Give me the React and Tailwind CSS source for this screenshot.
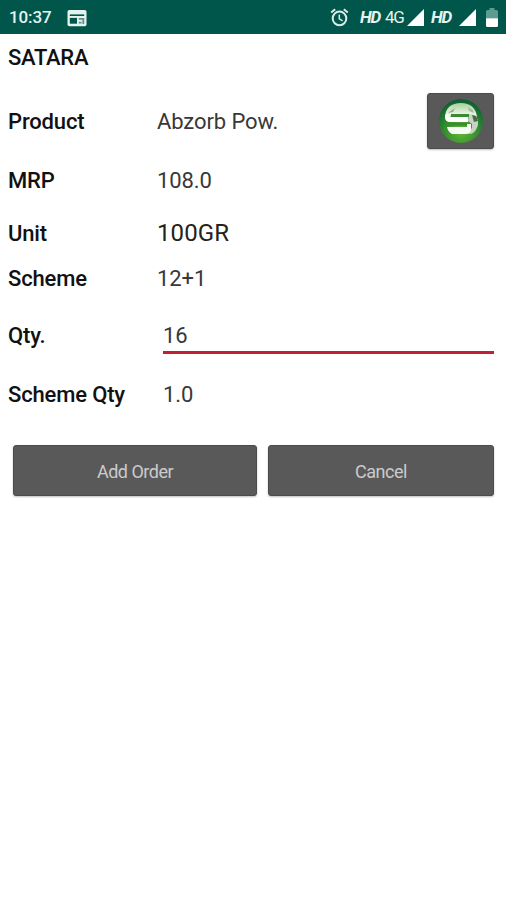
import { useState } from 'react';

function NewsIcon() {
  return (
    <svg className="mt-px ml-[16px] w-[20px] h-[18px]" viewBox="0 0 20 18" aria-hidden="true">
      <rect x="0.5" y="1" width="19" height="16.3" rx="1.8" fill="#e4f3ee" />
      <path d="M2.8 6.2H17.2" stroke="#00564a" strokeWidth="1.6" />
      <rect x="2.8" y="8.9" width="7.2" height="5.8" fill="#00564a" />
      <path d="M11.8 9.8H17.2M11.8 13.6H14.6" stroke="#5b9389" strokeWidth="1.8" />
      <path d="M16.3 9V15" stroke="#5b9389" strokeWidth="1.8" />
    </svg>
  );
}

function AlarmIcon() {
  return (
    <svg className="w-[19px] h-[19px]" fill="none" stroke="#d9ece7" viewBox="0 0 19 19" aria-hidden="true">
      <circle cx="9.5" cy="10.4" r="6.8" strokeWidth="2" />
      <path d="M1.2 4.6L5.2 1.3M17.8 4.6L13.8 1.3" strokeWidth="2" />
      <path d="M9.3 6.4V10.8L12.6 12.8" strokeWidth="1.5" />
    </svg>
  );
}

function SignalIcon() {
  return (
    <svg className="w-[17px] h-[17px]" viewBox="0 0 17 17" aria-hidden="true">
      <path d="M17 0V17H0Z" fill="#ffffff" />
    </svg>
  );
}

function BatteryIcon() {
  return (
    <svg className="w-[12px] h-[19px]" viewBox="0 0 12 19" aria-hidden="true">
      <path d="M3.5 0H8.5V2H10.5Q12 2 12 3.5V10.5H0V3.5Q0 2 1.5 2H3.5Z" fill="#5c9c90" />
      <path d="M0 10.3H12V17.5Q12 19 10.5 19H1.5Q0 19 0 17.5Z" fill="#ffffff" />
    </svg>
  );
}

function ProductLogo() {
  return (
    <svg className="w-[46px] h-[46px]" viewBox="0 0 46 46" aria-hidden="true">
      <defs>
        <radialGradient id="ball" cx="0.5" cy="0.75" r="0.7">
          <stop offset="0" stopColor="#62b832" />
          <stop offset="0.55" stopColor="#328e2e" />
          <stop offset="1" stopColor="#0f6033" />
        </radialGradient>
        <linearGradient id="cap" x1="0" y1="0" x2="0" y2="1">
          <stop offset="0" stopColor="#a5cf98" />
          <stop offset="0.7" stopColor="#f3f9f0" />
        </linearGradient>
      </defs>
      <circle cx="23" cy="23" r="22" fill="url(#ball)" />
      {/* ball top */}
      <path d="M7 19Q8 5 23 5Q37 5 39 19L32 17H13L11 23Q7 22 7 19Z" fill="url(#cap)" />
      <path d="M10 15L17 10L15 14Z" fill="#8fa58a" />
      <path d="M30 9L35 12L36 15L31 13Z" fill="#a5b9a0" />
      {/* shaded right side */}
      <path d="M31 16L37 17L40 22V27Q38 34 33 36L29 35L34 30V26L30 23Z" fill="#c6d2c2" />
      <path d="M34 17L38 18L40 23L36 24Z" fill="#4a6a47" />
      {/* letter body */}
      <path d="M7 17H12V19H30V24H12Q7 24 7 19Z" fill="#ffffff" />
      <path d="M9 29H29V26H33V31Q33 36 28 36H14Q10 34 9 29Z" fill="#f6fbf3" />
      <path d="M13 17.300H31M8 26.300H29" stroke="#3a8b34" strokeWidth="2.400" />
    </svg>
  );
}

function StatusBar() {
  return (
    <header className="flex h-[34px] items-center bg-[#00564a] pl-[9px] pr-[8px] text-[#e4f3ee]">
      <span className="mt-[2px] w-[42px] whitespace-nowrap text-[17px] font-medium tracking-[-0.1px]">10:37</span>
      <NewsIcon />
      <div className="ml-auto flex items-center whitespace-nowrap text-[17px]">
        <AlarmIcon />
        <span className="mt-px ml-[11px] w-[25px] font-bold italic tracking-[-1.2px]">HD</span>
        <span className="mt-px w-[22px] tracking-[-1.4px]">4G</span>
        <SignalIcon />
        <span className="mt-px ml-[7px] w-[28px] font-bold italic tracking-[-1.2px]">HD</span>
        <SignalIcon />
        <span className="ml-[10px]"><BatteryIcon /></span>
      </div>
    </header>
  );
}

function Field({ label, className, children }) {
  return (
    <div className={`flex items-center ${className}`}>
      <span className="w-[149px] shrink-0 text-[22px] font-medium tracking-[-0.15px] text-[#111111]">{label}</span>
      {children}
    </div>
  );
}

const VALUE = 'text-[22px] text-[#383838] tracking-[-0.1px]';
const BUTTON = 'h-[51px] rounded-[3px] border border-[#4b4b4c] bg-[#59595a] pt-[2px] text-[18px] tracking-[-0.5px] text-[#cbcbcb] shadow-[0_1px_2px_rgba(0,0,0,0.25)]';

export default function App() {
  const [qty, setQty] = useState('16');

  return (
    <div className="min-h-screen bg-white font-['Roboto',sans-serif]">
      <StatusBar />
      <main className="pl-2 pr-3">
        <h1 className="mt-[8px] h-8 text-[22px] leading-8 font-medium tracking-[-0.3px] text-[#111111]">SATARA</h1>

        <Field label="Product" className="mt-[19px] h-14">
          <span className={VALUE}>Abzorb Pow.</span>
          <button
            type="button"
            aria-label="Product details"
            className="ml-auto flex h-14 w-[67px] items-center justify-center rounded-[3px] border border-[#4b4b4c] bg-[#59595a] shadow-[0_1px_2px_rgba(0,0,0,0.25)]"
          >
            <ProductLogo />
          </button>
        </Field>
        <Field label="MRP" className="mt-[15px] h-8">
          <span className={VALUE}>108.0</span>
        </Field>
        <Field label="Unit" className="mt-[21px] h-8">
          <span className="text-[24px] tracking-[0.1px] text-[#222222]">100GR</span>
        </Field>
        <Field label="Scheme" className="mt-[13px] h-8">
          <span className={VALUE}>12+1</span>
        </Field>
        <Field label="Qty." className="mt-[25px] h-8">
          <input
            aria-label="Quantity"
            className="ml-[6px] mt-[3px] h-[35px] min-w-0 flex-1 border-b-3 border-[#c11f32] text-[22px] tracking-[-0.1px] text-[#383838] outline-none"
            value={qty}
            onChange={e => setQty(e.target.value)}
          />
        </Field>
        <Field label="Scheme Qty" className="mt-[27px] h-8">
          <span className="ml-[6px] text-[22px] tracking-[-0.1px] text-[#383838]">1.0</span>
        </Field>

        <div className="mt-[35px] ml-[5px] flex gap-[11px]">
          <button type="button" className={`w-[244px] ${BUTTON}`}>Add Order</button>
          <button type="button" className={`flex-1 ${BUTTON}`}>Cancel</button>
        </div>
      </main>
    </div>
  );
}
